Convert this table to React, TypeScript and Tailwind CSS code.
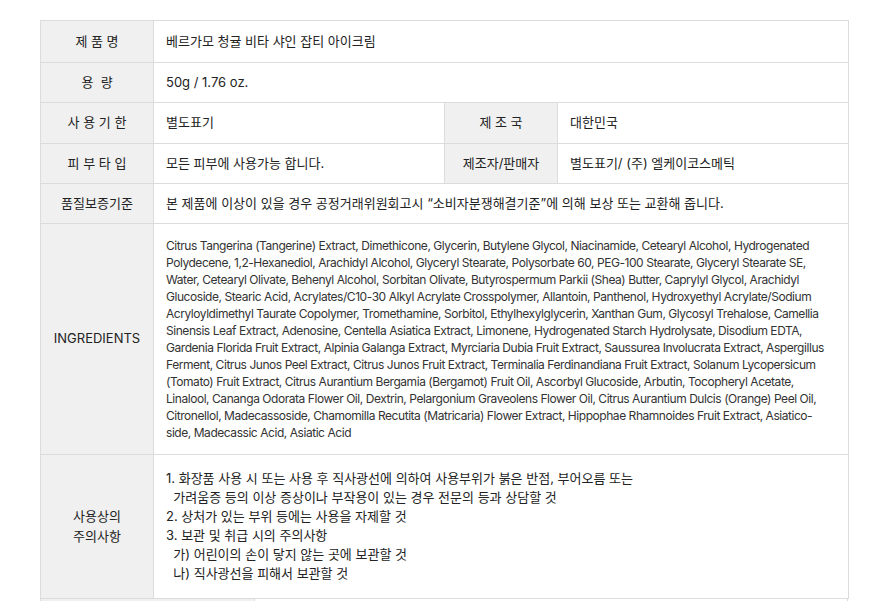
import React from 'react'

const ingredients = [
  'Citrus Tangerina (Tangerine) Extract, Dimethicone, Glycerin, Butylene Glycol, Niacinamide, Cetearyl Alcohol, Hydrogenated',
  'Polydecene, 1,2-Hexanediol, Arachidyl Alcohol, Glyceryl Stearate, Polysorbate 60, PEG-100 Stearate, Glyceryl Stearate SE,',
  'Water, Cetearyl Olivate, Behenyl Alcohol, Sorbitan Olivate, Butyrospermum Parkii (Shea) Butter, Caprylyl Glycol, Arachidyl',
  'Glucoside, Stearic Acid, Acrylates/C10-30 Alkyl Acrylate Crosspolymer, Allantoin, Panthenol, Hydroxyethyl Acrylate/Sodium',
  'Acryloyldimethyl Taurate Copolymer, Tromethamine, Sorbitol, Ethylhexylglycerin, Xanthan Gum, Glycosyl Trehalose, Camellia',
  'Sinensis Leaf Extract, Adenosine, Centella Asiatica Extract, Limonene, Hydrogenated Starch Hydrolysate, Disodium EDTA,',
  'Gardenia Florida Fruit Extract, Alpinia Galanga Extract, Myrciaria Dubia Fruit Extract, Saussurea Involucrata Extract, Aspergillus',
  'Ferment, Citrus Junos Peel Extract, Citrus Junos Fruit Extract, Terminalia Ferdinandiana Fruit Extract, Solanum Lycopersicum',
  '(Tomato) Fruit Extract, Citrus Aurantium Bergamia (Bergamot) Fruit Oil, Ascorbyl Glucoside, Arbutin, Tocopheryl Acetate,',
  'Linalool, Cananga Odorata Flower Oil, Dextrin, Pelargonium Graveolens Flower Oil, Citrus Aurantium Dulcis (Orange) Peel Oil,',
  'Citronellol, Madecassoside, Chamomilla Recutita (Matricaria) Flower Extract, Hippophae Rhamnoides Fruit Extract, Asiatico-',
  'side, Madecassic Acid, Asiatic Acid',
]

const cautions = [
  '1. 화장품 사용 시 또는 사용 후 직사광선에 의하여 사용부위가 붉은 반점, 부어오름 또는',
  '\u00a0\u00a0가려움증 등의 이상 증상이나 부작용이 있는 경우 전문의 등과 상담할 것',
  '2. 상처가 있는 부위 등에는 사용을 자제할 것',
  '3. 보관 및 취급 시의 주의사항',
  '\u00a0\u00a0가) 어린이의 손이 닿지 않는 곳에 보관할 것',
  '\u00a0\u00a0나) 직사광선을 피해서 보관할 것',
]

// 라벨 셀 / 값 셀
const th = 'border border-[#dcdcdc] bg-[#f0f0f0] text-center text-[13px] text-[#222] font-normal'
const td = 'border border-[#dcdcdc] bg-white pl-3 text-[13px] text-[#222]'

export default function App() {
  return (
    <div
      className="min-h-screen bg-white pt-5 pl-10"
      style={{ fontFamily: 'Inter, "Noto Sans CJK KR", sans-serif' }}
    >
      <table className="w-[808px] table-fixed border-collapse">
        <colgroup>
          <col className="w-[113px]" />
          <col className="w-[291px]" />
          <col className="w-[113px]" />
          <col className="w-[291px]" />
        </colgroup>
        <tbody>
          <tr className="h-[42px]">
            <th className={th}>제 품 명</th>
            <td className={td} colSpan={3}>베르가모 청귤 비타 샤인 잡티 아이크림</td>
          </tr>
          <tr className="h-[40px]">
            <th className={th}>용 &nbsp;량</th>
            <td className={td} colSpan={3}>50g / 1.76 oz.</td>
          </tr>
          <tr className="h-[41px]">
            <th className={th}>사 용 기 한</th>
            <td className={td}>별도표기</td>
            <th className={th}>제 조 국</th>
            <td className={td}>대한민국</td>
          </tr>
          <tr className="h-[40px]">
            <th className={th}>피 부 타 입</th>
            <td className={td}>모든 피부에 사용가능 합니다.</td>
            <th className={th}>제조자/판매자</th>
            <td className={td}>별도표기/ (주) 엘케이코스메틱</td>
          </tr>
          <tr className="h-[40px]">
            <th className={th}>품질보증기준</th>
            <td className={td} colSpan={3}>
              본 제품에 이상이 있을 경우 공정거래위원회고시 “소비자분쟁해결기준”에 의해 보상 또는 교환해 줍니다.
            </td>
          </tr>
          <tr className="h-[231px]">
            <th className={th}>INGREDIENTS</th>
            <td className={`${td} py-3`} colSpan={3}>
              <div className="text-[12px] leading-[17px] tracking-[-0.45px] text-[#333]">
                {ingredients.map((line) => (
                  <div key={line} className="whitespace-nowrap">
                    {line}
                  </div>
                ))}
              </div>
            </td>
          </tr>
          <tr className="h-[143px]">
            <th className={th}>
              사용상의
              <br />
              주의사항
            </th>
            <td className={`${td} pt-[14px] pb-[15px]`} colSpan={3}>
              <div className="leading-[19px]">
                {cautions.map((line) => (
                  <div key={line} className="whitespace-pre">
                    {line}
                  </div>
                ))}
              </div>
            </td>
          </tr>
        </tbody>
      </table>
      <div className="flex w-[808px] h-[20px] border-x border-b border-[#dcdcdc]">
        <div className="w-[214px] bg-[#f0f0f0] border-r border-[#dcdcdc]" />
        <div className="flex-1 bg-white" />
      </div>
    </div>
  )
}
